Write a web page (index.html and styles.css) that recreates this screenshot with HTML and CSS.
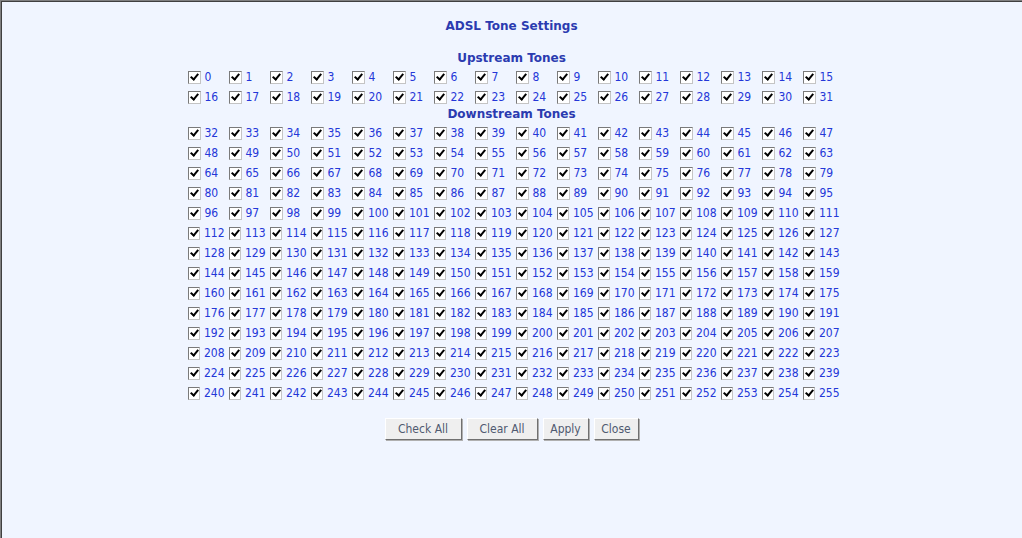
FILE: index.html
```html
<!DOCTYPE html>
<html lang="en">
<head>
  <meta charset="UTF-8">
  <title>ADSL Tone Settings</title>
  <link rel="stylesheet" href="styles.css">
</head>
<body>
  <h1 class="title">ADSL Tone Settings</h1>

  <form id="toneForm">
    <!-- Upstream tones 0-31 -->
    <h2 class="section">Upstream Tones</h2>
    <div class="tones">
      <label class="tone"><input type="checkbox" checked>0</label>
      <label class="tone"><input type="checkbox" checked>1</label>
      <label class="tone"><input type="checkbox" checked>2</label>
      <label class="tone"><input type="checkbox" checked>3</label>
      <label class="tone"><input type="checkbox" checked>4</label>
      <label class="tone"><input type="checkbox" checked>5</label>
      <label class="tone"><input type="checkbox" checked>6</label>
      <label class="tone"><input type="checkbox" checked>7</label>
      <label class="tone"><input type="checkbox" checked>8</label>
      <label class="tone"><input type="checkbox" checked>9</label>
      <label class="tone"><input type="checkbox" checked>10</label>
      <label class="tone"><input type="checkbox" checked>11</label>
      <label class="tone"><input type="checkbox" checked>12</label>
      <label class="tone"><input type="checkbox" checked>13</label>
      <label class="tone"><input type="checkbox" checked>14</label>
      <label class="tone"><input type="checkbox" checked>15</label>
      <label class="tone"><input type="checkbox" checked>16</label>
      <label class="tone"><input type="checkbox" checked>17</label>
      <label class="tone"><input type="checkbox" checked>18</label>
      <label class="tone"><input type="checkbox" checked>19</label>
      <label class="tone"><input type="checkbox" checked>20</label>
      <label class="tone"><input type="checkbox" checked>21</label>
      <label class="tone"><input type="checkbox" checked>22</label>
      <label class="tone"><input type="checkbox" checked>23</label>
      <label class="tone"><input type="checkbox" checked>24</label>
      <label class="tone"><input type="checkbox" checked>25</label>
      <label class="tone"><input type="checkbox" checked>26</label>
      <label class="tone"><input type="checkbox" checked>27</label>
      <label class="tone"><input type="checkbox" checked>28</label>
      <label class="tone"><input type="checkbox" checked>29</label>
      <label class="tone"><input type="checkbox" checked>30</label>
      <label class="tone"><input type="checkbox" checked>31</label>
    </div>

    <!-- Downstream tones 32-255 -->
    <h2 class="section">Downstream Tones</h2>
    <div class="tones">
      <label class="tone"><input type="checkbox" checked>32</label>
      <label class="tone"><input type="checkbox" checked>33</label>
      <label class="tone"><input type="checkbox" checked>34</label>
      <label class="tone"><input type="checkbox" checked>35</label>
      <label class="tone"><input type="checkbox" checked>36</label>
      <label class="tone"><input type="checkbox" checked>37</label>
      <label class="tone"><input type="checkbox" checked>38</label>
      <label class="tone"><input type="checkbox" checked>39</label>
      <label class="tone"><input type="checkbox" checked>40</label>
      <label class="tone"><input type="checkbox" checked>41</label>
      <label class="tone"><input type="checkbox" checked>42</label>
      <label class="tone"><input type="checkbox" checked>43</label>
      <label class="tone"><input type="checkbox" checked>44</label>
      <label class="tone"><input type="checkbox" checked>45</label>
      <label class="tone"><input type="checkbox" checked>46</label>
      <label class="tone"><input type="checkbox" checked>47</label>
      <label class="tone"><input type="checkbox" checked>48</label>
      <label class="tone"><input type="checkbox" checked>49</label>
      <label class="tone"><input type="checkbox" checked>50</label>
      <label class="tone"><input type="checkbox" checked>51</label>
      <label class="tone"><input type="checkbox" checked>52</label>
      <label class="tone"><input type="checkbox" checked>53</label>
      <label class="tone"><input type="checkbox" checked>54</label>
      <label class="tone"><input type="checkbox" checked>55</label>
      <label class="tone"><input type="checkbox" checked>56</label>
      <label class="tone"><input type="checkbox" checked>57</label>
      <label class="tone"><input type="checkbox" checked>58</label>
      <label class="tone"><input type="checkbox" checked>59</label>
      <label class="tone"><input type="checkbox" checked>60</label>
      <label class="tone"><input type="checkbox" checked>61</label>
      <label class="tone"><input type="checkbox" checked>62</label>
      <label class="tone"><input type="checkbox" checked>63</label>
      <label class="tone"><input type="checkbox" checked>64</label>
      <label class="tone"><input type="checkbox" checked>65</label>
      <label class="tone"><input type="checkbox" checked>66</label>
      <label class="tone"><input type="checkbox" checked>67</label>
      <label class="tone"><input type="checkbox" checked>68</label>
      <label class="tone"><input type="checkbox" checked>69</label>
      <label class="tone"><input type="checkbox" checked>70</label>
      <label class="tone"><input type="checkbox" checked>71</label>
      <label class="tone"><input type="checkbox" checked>72</label>
      <label class="tone"><input type="checkbox" checked>73</label>
      <label class="tone"><input type="checkbox" checked>74</label>
      <label class="tone"><input type="checkbox" checked>75</label>
      <label class="tone"><input type="checkbox" checked>76</label>
      <label class="tone"><input type="checkbox" checked>77</label>
      <label class="tone"><input type="checkbox" checked>78</label>
      <label class="tone"><input type="checkbox" checked>79</label>
      <label class="tone"><input type="checkbox" checked>80</label>
      <label class="tone"><input type="checkbox" checked>81</label>
      <label class="tone"><input type="checkbox" checked>82</label>
      <label class="tone"><input type="checkbox" checked>83</label>
      <label class="tone"><input type="checkbox" checked>84</label>
      <label class="tone"><input type="checkbox" checked>85</label>
      <label class="tone"><input type="checkbox" checked>86</label>
      <label class="tone"><input type="checkbox" checked>87</label>
      <label class="tone"><input type="checkbox" checked>88</label>
      <label class="tone"><input type="checkbox" checked>89</label>
      <label class="tone"><input type="checkbox" checked>90</label>
      <label class="tone"><input type="checkbox" checked>91</label>
      <label class="tone"><input type="checkbox" checked>92</label>
      <label class="tone"><input type="checkbox" checked>93</label>
      <label class="tone"><input type="checkbox" checked>94</label>
      <label class="tone"><input type="checkbox" checked>95</label>
      <label class="tone"><input type="checkbox" checked>96</label>
      <label class="tone"><input type="checkbox" checked>97</label>
      <label class="tone"><input type="checkbox" checked>98</label>
      <label class="tone"><input type="checkbox" checked>99</label>
      <label class="tone"><input type="checkbox" checked>100</label>
      <label class="tone"><input type="checkbox" checked>101</label>
      <label class="tone"><input type="checkbox" checked>102</label>
      <label class="tone"><input type="checkbox" checked>103</label>
      <label class="tone"><input type="checkbox" checked>104</label>
      <label class="tone"><input type="checkbox" checked>105</label>
      <label class="tone"><input type="checkbox" checked>106</label>
      <label class="tone"><input type="checkbox" checked>107</label>
      <label class="tone"><input type="checkbox" checked>108</label>
      <label class="tone"><input type="checkbox" checked>109</label>
      <label class="tone"><input type="checkbox" checked>110</label>
      <label class="tone"><input type="checkbox" checked>111</label>
      <label class="tone"><input type="checkbox" checked>112</label>
      <label class="tone"><input type="checkbox" checked>113</label>
      <label class="tone"><input type="checkbox" checked>114</label>
      <label class="tone"><input type="checkbox" checked>115</label>
      <label class="tone"><input type="checkbox" checked>116</label>
      <label class="tone"><input type="checkbox" checked>117</label>
      <label class="tone"><input type="checkbox" checked>118</label>
      <label class="tone"><input type="checkbox" checked>119</label>
      <label class="tone"><input type="checkbox" checked>120</label>
      <label class="tone"><input type="checkbox" checked>121</label>
      <label class="tone"><input type="checkbox" checked>122</label>
      <label class="tone"><input type="checkbox" checked>123</label>
      <label class="tone"><input type="checkbox" checked>124</label>
      <label class="tone"><input type="checkbox" checked>125</label>
      <label class="tone"><input type="checkbox" checked>126</label>
      <label class="tone"><input type="checkbox" checked>127</label>
      <label class="tone"><input type="checkbox" checked>128</label>
      <label class="tone"><input type="checkbox" checked>129</label>
      <label class="tone"><input type="checkbox" checked>130</label>
      <label class="tone"><input type="checkbox" checked>131</label>
      <label class="tone"><input type="checkbox" checked>132</label>
      <label class="tone"><input type="checkbox" checked>133</label>
      <label class="tone"><input type="checkbox" checked>134</label>
      <label class="tone"><input type="checkbox" checked>135</label>
      <label class="tone"><input type="checkbox" checked>136</label>
      <label class="tone"><input type="checkbox" checked>137</label>
      <label class="tone"><input type="checkbox" checked>138</label>
      <label class="tone"><input type="checkbox" checked>139</label>
      <label class="tone"><input type="checkbox" checked>140</label>
      <label class="tone"><input type="checkbox" checked>141</label>
      <label class="tone"><input type="checkbox" checked>142</label>
      <label class="tone"><input type="checkbox" checked>143</label>
      <label class="tone"><input type="checkbox" checked>144</label>
      <label class="tone"><input type="checkbox" checked>145</label>
      <label class="tone"><input type="checkbox" checked>146</label>
      <label class="tone"><input type="checkbox" checked>147</label>
      <label class="tone"><input type="checkbox" checked>148</label>
      <label class="tone"><input type="checkbox" checked>149</label>
      <label class="tone"><input type="checkbox" checked>150</label>
      <label class="tone"><input type="checkbox" checked>151</label>
      <label class="tone"><input type="checkbox" checked>152</label>
      <label class="tone"><input type="checkbox" checked>153</label>
      <label class="tone"><input type="checkbox" checked>154</label>
      <label class="tone"><input type="checkbox" checked>155</label>
      <label class="tone"><input type="checkbox" checked>156</label>
      <label class="tone"><input type="checkbox" checked>157</label>
      <label class="tone"><input type="checkbox" checked>158</label>
      <label class="tone"><input type="checkbox" checked>159</label>
      <label class="tone"><input type="checkbox" checked>160</label>
      <label class="tone"><input type="checkbox" checked>161</label>
      <label class="tone"><input type="checkbox" checked>162</label>
      <label class="tone"><input type="checkbox" checked>163</label>
      <label class="tone"><input type="checkbox" checked>164</label>
      <label class="tone"><input type="checkbox" checked>165</label>
      <label class="tone"><input type="checkbox" checked>166</label>
      <label class="tone"><input type="checkbox" checked>167</label>
      <label class="tone"><input type="checkbox" checked>168</label>
      <label class="tone"><input type="checkbox" checked>169</label>
      <label class="tone"><input type="checkbox" checked>170</label>
      <label class="tone"><input type="checkbox" checked>171</label>
      <label class="tone"><input type="checkbox" checked>172</label>
      <label class="tone"><input type="checkbox" checked>173</label>
      <label class="tone"><input type="checkbox" checked>174</label>
      <label class="tone"><input type="checkbox" checked>175</label>
      <label class="tone"><input type="checkbox" checked>176</label>
      <label class="tone"><input type="checkbox" checked>177</label>
      <label class="tone"><input type="checkbox" checked>178</label>
      <label class="tone"><input type="checkbox" checked>179</label>
      <label class="tone"><input type="checkbox" checked>180</label>
      <label class="tone"><input type="checkbox" checked>181</label>
      <label class="tone"><input type="checkbox" checked>182</label>
      <label class="tone"><input type="checkbox" checked>183</label>
      <label class="tone"><input type="checkbox" checked>184</label>
      <label class="tone"><input type="checkbox" checked>185</label>
      <label class="tone"><input type="checkbox" checked>186</label>
      <label class="tone"><input type="checkbox" checked>187</label>
      <label class="tone"><input type="checkbox" checked>188</label>
      <label class="tone"><input type="checkbox" checked>189</label>
      <label class="tone"><input type="checkbox" checked>190</label>
      <label class="tone"><input type="checkbox" checked>191</label>
      <label class="tone"><input type="checkbox" checked>192</label>
      <label class="tone"><input type="checkbox" checked>193</label>
      <label class="tone"><input type="checkbox" checked>194</label>
      <label class="tone"><input type="checkbox" checked>195</label>
      <label class="tone"><input type="checkbox" checked>196</label>
      <label class="tone"><input type="checkbox" checked>197</label>
      <label class="tone"><input type="checkbox" checked>198</label>
      <label class="tone"><input type="checkbox" checked>199</label>
      <label class="tone"><input type="checkbox" checked>200</label>
      <label class="tone"><input type="checkbox" checked>201</label>
      <label class="tone"><input type="checkbox" checked>202</label>
      <label class="tone"><input type="checkbox" checked>203</label>
      <label class="tone"><input type="checkbox" checked>204</label>
      <label class="tone"><input type="checkbox" checked>205</label>
      <label class="tone"><input type="checkbox" checked>206</label>
      <label class="tone"><input type="checkbox" checked>207</label>
      <label class="tone"><input type="checkbox" checked>208</label>
      <label class="tone"><input type="checkbox" checked>209</label>
      <label class="tone"><input type="checkbox" checked>210</label>
      <label class="tone"><input type="checkbox" checked>211</label>
      <label class="tone"><input type="checkbox" checked>212</label>
      <label class="tone"><input type="checkbox" checked>213</label>
      <label class="tone"><input type="checkbox" checked>214</label>
      <label class="tone"><input type="checkbox" checked>215</label>
      <label class="tone"><input type="checkbox" checked>216</label>
      <label class="tone"><input type="checkbox" checked>217</label>
      <label class="tone"><input type="checkbox" checked>218</label>
      <label class="tone"><input type="checkbox" checked>219</label>
      <label class="tone"><input type="checkbox" checked>220</label>
      <label class="tone"><input type="checkbox" checked>221</label>
      <label class="tone"><input type="checkbox" checked>222</label>
      <label class="tone"><input type="checkbox" checked>223</label>
      <label class="tone"><input type="checkbox" checked>224</label>
      <label class="tone"><input type="checkbox" checked>225</label>
      <label class="tone"><input type="checkbox" checked>226</label>
      <label class="tone"><input type="checkbox" checked>227</label>
      <label class="tone"><input type="checkbox" checked>228</label>
      <label class="tone"><input type="checkbox" checked>229</label>
      <label class="tone"><input type="checkbox" checked>230</label>
      <label class="tone"><input type="checkbox" checked>231</label>
      <label class="tone"><input type="checkbox" checked>232</label>
      <label class="tone"><input type="checkbox" checked>233</label>
      <label class="tone"><input type="checkbox" checked>234</label>
      <label class="tone"><input type="checkbox" checked>235</label>
      <label class="tone"><input type="checkbox" checked>236</label>
      <label class="tone"><input type="checkbox" checked>237</label>
      <label class="tone"><input type="checkbox" checked>238</label>
      <label class="tone"><input type="checkbox" checked>239</label>
      <label class="tone"><input type="checkbox" checked>240</label>
      <label class="tone"><input type="checkbox" checked>241</label>
      <label class="tone"><input type="checkbox" checked>242</label>
      <label class="tone"><input type="checkbox" checked>243</label>
      <label class="tone"><input type="checkbox" checked>244</label>
      <label class="tone"><input type="checkbox" checked>245</label>
      <label class="tone"><input type="checkbox" checked>246</label>
      <label class="tone"><input type="checkbox" checked>247</label>
      <label class="tone"><input type="checkbox" checked>248</label>
      <label class="tone"><input type="checkbox" checked>249</label>
      <label class="tone"><input type="checkbox" checked>250</label>
      <label class="tone"><input type="checkbox" checked>251</label>
      <label class="tone"><input type="checkbox" checked>252</label>
      <label class="tone"><input type="checkbox" checked>253</label>
      <label class="tone"><input type="checkbox" checked>254</label>
      <label class="tone"><input type="checkbox" checked>255</label>
    </div>

    <div class="actions">
      <button type="button" class="btn btn-check">Check All</button>
      <button type="button" class="btn btn-clear">Clear All</button>
      <button type="button" class="btn btn-apply">Apply</button>
      <button type="button" class="btn btn-close">Close</button>
    </div>
  </form>
</body>
</html>
```

FILE: styles.css
```css
html, body {
  height: 100%;
}
body {
  margin: 0;
  box-sizing: border-box;
  padding-top: 15px;
  background-color: #f0f5ff;
  border-top: 1px solid #808080;
  border-left: 1px solid #808080;
  box-shadow: inset 1px 1px #404040;
  font-family: "DejaVu Sans", Verdana, sans-serif;
  font-size: 11px;
}
.title {
  margin: 0 0 15px;
  text-align: center;
  font-size: 12px;
  line-height: 20px;
  color: #2b3bb0;
}
.section {
  margin: 0;
  text-align: center;
  font-size: 12px;
  line-height: 15px;
  color: #2b3bb0;
}
.tones {
  display: grid;
  grid-template-columns: repeat(16, 41px);
  width: 656px;
  margin: 1px auto 0;
}
.tone {
  display: flex;
  align-items: center;
  height: 20px;
  font-family: "DejaVu Sans Condensed", "DejaVu Sans", sans-serif;
  font-size: 12px;
  color: #2437d8;
}
.tone input {
  appearance: none;
  -webkit-appearance: none;
  box-sizing: border-box;
  width: 13px;
  height: 13px;
  margin: 0 4px 0 4px;
  border: 1px solid;
  border-color: #7a7a7a #c4c4c4 #c4c4c4 #7a7a7a;
  background-color: #fff;
}
.tone input:checked::after {
  content: "";
  display: block;
  width: 3px;
  height: 6px;
  margin: 0 0 0 3px;
  border: solid #000;
  border-width: 0 2px 2px 0;
  transform: rotate(40deg);
}
.actions {
  display: flex;
  justify-content: center;
  gap: 5px;
  margin-top: 15px;
}
.btn {
  height: 22px;
  padding: 0;
  font-family: "DejaVu Sans Condensed", "DejaVu Sans", sans-serif;
  font-size: 12px;
  color: #505a70;
  background-color: #efefef;
  border: 1px solid;
  border-color: #fff #707070 #707070 #fff;
  box-shadow: 1px 1px #b0b0b0;
}
.btn-check {
  width: 77px;
}
.btn-clear {
  width: 71px;
}
.btn-apply {
  width: 46px;
}
.btn-close {
  width: 45px;
}
```
